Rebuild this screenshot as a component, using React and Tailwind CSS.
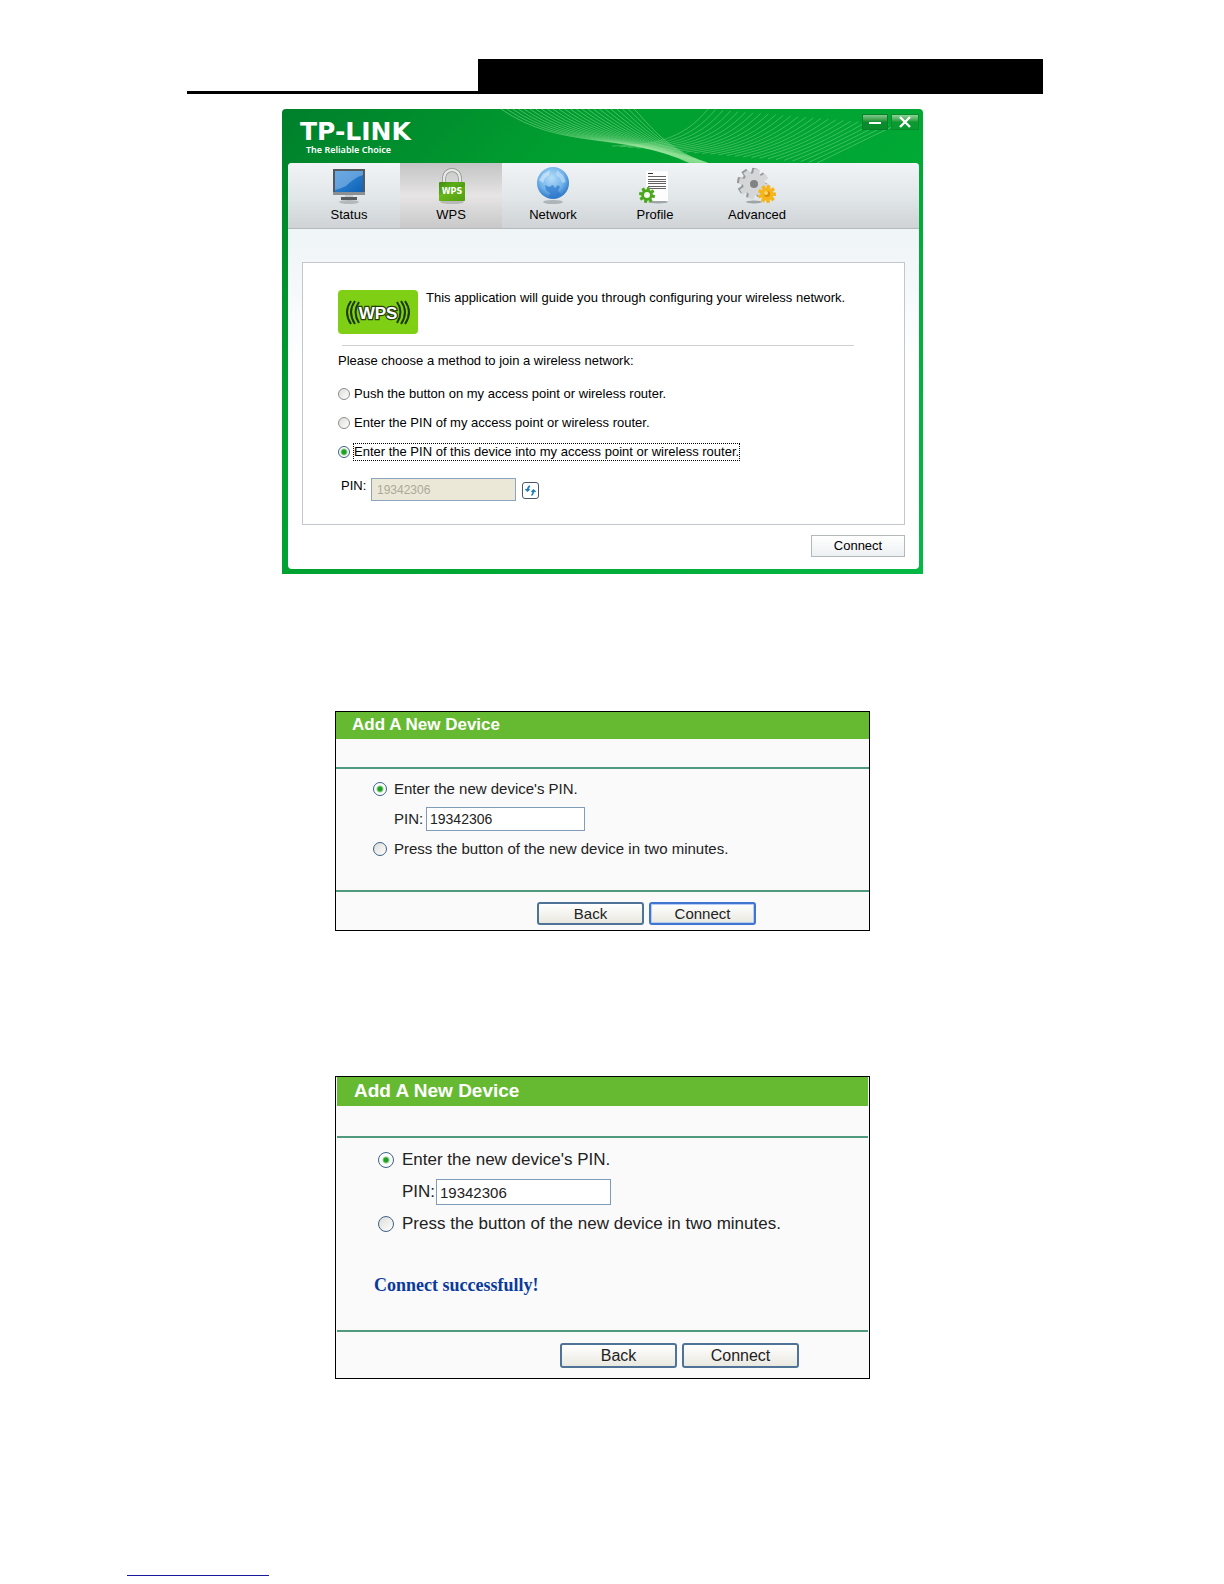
import React from 'react';
import clsx from 'clsx';

const RADIO =
  'appearance-none shrink-0 rounded-full border border-[#3c6288] bg-[linear-gradient(135deg,#dcdcd7,#fff)] checked:bg-[radial-gradient(circle,#21a121_0_2px,#8fd08f_3px,#fdfdfd_4px)]';

// evenly spaced curves between a first and a last one
const sweep = (count, from, to) =>
  Array.from({ length: count }, (_, i) => {
    const p = from.map((v, k) => (v + ((to[k] - v) * i) / (count - 1)).toFixed(1));
    return `M${p[0]},${p[1]} C${p[2]},${p[3]} ${p[4]},${p[5]} ${p[6]},${p[7]}`;
  });

const leftWaves = sweep(24, [219, 0, 280, 42, 340, 22, 408, 54], [352, 0, 366, 14, 385, 42, 426, 54]);
const rightWaves = sweep(26, [426, 0, 400, 32, 370, 36, 330, 37], [614, 16, 580, 32, 560, 42, 535, 54]);

const Waves = () => (
  <svg className="absolute top-0 left-0" width="641" height="54" viewBox="0 0 641 54" fill="none" aria-hidden="true">
    {leftWaves.map((d) => (
      <path key={d} d={d} stroke="#a2e8a2" strokeWidth="0.7" opacity="0.65" />
    ))}
    {rightWaves.map((d) => (
      <path key={d} d={d} stroke="#a2e8a2" strokeWidth="0.7" opacity="0.55" />
    ))}
  </svg>
);

const Gear = ({ cx, cy, r, teeth, fill, hole, holeFill }) => (
  <g transform={`translate(${cx} ${cy})`}>
    {Array.from({ length: teeth }, (_, i) => (
      <rect
        key={i}
        x={-r * 0.2}
        y={-r}
        width={r * 0.4}
        height={r * 0.6}
        rx="0.6"
        fill={fill}
        transform={`rotate(${(360 / teeth) * i + 12})`}
      />
    ))}
    <circle r={r * 0.72} fill={fill} />
    <circle r={hole} fill={holeFill} />
  </g>
);

const StatusIcon = () => (
  <svg width="40" height="40" viewBox="0 0 40 40" aria-hidden="true">
    <defs>
      <linearGradient id="screen" x1="0" y1="0" x2="1" y2="1">
        <stop offset="0" stopColor="#3f8fd8" />
        <stop offset="1" stopColor="#0d63b8" />
      </linearGradient>
    </defs>
    <ellipse cx="20" cy="36" rx="10" ry="2" fill="#b4babc" />
    <rect x="4" y="3" width="32" height="26" fill="#55595c" />
    <rect x="4" y="26" width="32" height="3" fill="#8b9093" />
    <rect x="6" y="5" width="28" height="21" fill="url(#screen)" />
    <path d="M6 5H34V9C27 11 22 15 17 20C13 22 9 23 6 24Z" fill="#8fc0ec" opacity="0.55" />
    <rect x="16" y="29" width="8" height="3" fill="#c9cccd" />
    <rect x="12" y="31" width="16" height="3" fill="#585d60" />
  </svg>
);

const LockIcon = () => (
  <svg width="40" height="40" viewBox="0 0 40 40" aria-hidden="true">
    <defs>
      <linearGradient id="lock" x1="0" y1="0" x2="1" y2="1">
        <stop offset="0" stopColor="#3f8a10" />
        <stop offset="0.35" stopColor="#5cae17" />
        <stop offset="1" stopColor="#2f7d0b" />
      </linearGradient>
    </defs>
    <ellipse cx="21" cy="36" rx="12" ry="2" fill="#b9b9b7" />
    <path d="M13 18V12A8 8 0 0 1 29 12V18" fill="none" stroke="#8d8f8c" strokeWidth="4" />
    <path d="M13 18V12A8 8 0 0 1 29 12V18" fill="none" stroke="#e6e8e5" strokeWidth="2.500" />
    <rect x="8" y="16" width="26" height="19" rx="1" fill="url(#lock)" />
    <path d="M8 29L34 20V35H8Z" fill="#7cc61f" opacity="0.45" />
    <text x="21" y="28" textAnchor="middle" fontFamily="DejaVu Sans" fontWeight="bold" fontSize="8" fill="#fff">
      WPS
    </text>
  </svg>
);

const GlobeIcon = () => (
  <svg width="40" height="40" viewBox="0 0 40 40" aria-hidden="true">
    <defs>
      <radialGradient id="globe" cx="0.45" cy="0.35" r="0.65">
        <stop offset="0" stopColor="#b7ddf8" />
        <stop offset="0.6" stopColor="#72b3ea" />
        <stop offset="1" stopColor="#2b78c8" />
      </radialGradient>
    </defs>
    <ellipse cx="20" cy="36" rx="10" ry="2" fill="#adb5b9" />
    <circle cx="20" cy="17" r="16" fill="url(#globe)" />
    <path d="M12 19L16 21L20 19L22 22L25 19L27 21L25 25L28 28L23 32L16 32L17 27L13 24Z" fill="#2f77cc" opacity="0.7" />
    <path d="M6 14L10 8L17 4L16 9L12 12L10 17Z" fill="#e2f3fd" opacity="0.55" />
    <path d="M24 4L30 9L33 16L29 17L27 12L23 9Z" fill="#d3ebfb" opacity="0.5" />
  </svg>
);

const ProfileIcon = () => (
  <svg width="40" height="40" viewBox="0 0 40 40" aria-hidden="true">
    <ellipse cx="23" cy="36" rx="10" ry="1.500" fill="#9fa5a6" />
    <rect x="11" y="5" width="22" height="30" fill="#fdfdfd" />
    <path d="M13 7.500H18" stroke="#333" />
    {[10.5, 13.5, 15.5, 17.5, 20.5, 22.5].map((y) => (
      <path key={y} d={`M13 ${y}H31`} stroke="#626262" />
    ))}
    <Gear cx={12} cy={29} r={8} teeth={8} fill="#4aa81c" hole={3} holeFill="#f4fbef" />
  </svg>
);

const AdvancedIcon = () => (
  <svg width="40" height="40" viewBox="0 0 40 40" aria-hidden="true">
    <ellipse cx="17" cy="36" rx="8" ry="1.500" fill="#9fa5a6" />
    <Gear cx={15} cy={17} r={15} teeth={8} fill="#96999b" hole={5} holeFill="#85898c" />
    <Gear cx={17} cy={18} r={15} teeth={8} fill="#d4d6d7" hole={4} holeFill="#7f8386" />
    <Gear cx={30} cy={28} r={9} teeth={9} fill="#f6b51a" hole={3} holeFill="#d98e08" />
    <circle cx="29" cy="27" r="2" fill="#fbd865" />
  </svg>
);

const tabs = [
  { name: 'Status', icon: StatusIcon },
  { name: 'WPS', icon: LockIcon, active: true },
  { name: 'Network', icon: GlobeIcon },
  { name: 'Profile', icon: ProfileIcon },
  { name: 'Advanced', icon: AdvancedIcon },
];

const WpsBadge = () => (
  <svg className="shrink-0" width="80" height="44" viewBox="0 0 80 44" role="img" aria-label="WPS">
    <rect width="80" height="44" rx="4" fill="#7fd014" />
    <g fill="none" stroke="#1c3a05" strokeWidth="2">
      <path d="M13 11Q5 22 13 34" />
      <path d="M17 11Q9 22 17 34" />
      <path d="M21 12Q14 22 21 33" />
      <path d="M67 11Q75 22 67 34" />
      <path d="M63 11Q71 22 63 34" />
      <path d="M59 12Q66 22 59 33" />
    </g>
    <text
      x="40"
      y="29"
      textAnchor="middle"
      fontFamily="Liberation Sans Narrow, Liberation Sans"
      fontWeight="bold"
      fontSize="17"
      fill="#fff"
      stroke="#26400c"
      strokeWidth="2.500"
      paintOrder="stroke"
    >
      WPS
    </text>
  </svg>
);

const methods = [
  'Push the button on my access point or wireless router.',
  'Enter the PIN of my access point or wireless router.',
  'Enter the PIN of this device into my access point or wireless router.',
];

const UtilityWindow = () => (
  <section className="relative w-full max-w-[641px] overflow-hidden rounded-t bg-[linear-gradient(135deg,#007f2b,#009e30_28%,#00a834_60%,#05b845)] pr-1 pb-[5px] pl-[6px]">
    <Waves />
    <header className="relative flex h-[54px] items-start justify-between pt-[5px]">
      <div className="pt-1 pl-3 text-white">
        <h1 className="font-['DejaVu_Sans',sans-serif] text-[25px] leading-[27px] font-bold">TP-LINK</h1>
        <p className="pl-[6px] font-['Noto_Sans',sans-serif] text-[9px] leading-[10px] font-semibold">The Reliable Choice</p>
      </div>
      <div className="flex gap-[3px]">
        <button
          aria-label="Minimize"
          className="flex h-4 w-[26px] items-center justify-center border border-[#0a7f2b] bg-linear-to-b from-[#7fcb8b] to-[#0a8c2d] to-50%"
        >
          <svg width="14" height="14" viewBox="0 0 14 14" stroke="#fff" strokeWidth="2">
            <path d="M1 8H13" />
          </svg>
        </button>
        <button
          aria-label="Close"
          className="flex h-4 w-[28px] items-center justify-center border border-[#0a8a2d] bg-linear-to-b from-[#8ed59a] to-[#0a9a30] to-50%"
        >
          <svg width="14" height="14" viewBox="0 0 14 14" stroke="#fff" strokeWidth="2.400">
            <path d="M2 2L12 12M12 2L2 12" />
          </svg>
        </button>
      </div>
    </header>

    <div className="relative overflow-hidden rounded bg-linear-to-b from-[#f0f5f8] from-20% to-white to-50%">
      <nav className="h-[66px] border-b border-[#b5babd] bg-linear-to-b from-[#f1f4f7] via-[#e2e7ea] to-[#cfd3d6] pl-[10px]">
        <div className="grid h-full w-full max-w-[510px] grid-cols-5">
          {tabs.map((tab) => (
            <button
              key={tab.name}
              className={clsx(
                'flex flex-col items-center pt-[3px] text-[13px] leading-4 text-black',
                tab.active && 'bg-linear-to-b from-[#c4c4c4] via-[#e6e4e4] to-[#c9c9c9]'
              )}
            >
              <tab.icon />
              <span className="pt-px">{tab.name}</span>
            </button>
          ))}
        </div>
      </nav>

      <div className="px-[14px] pt-[33px] pb-3">
        <div className="min-h-[263px] border border-[#c3c7ca] bg-white pt-[27px] pr-[50px] pl-[35px] text-[13px] leading-4 text-black">
          <div className="flex gap-2">
            <WpsBadge />
            <p>This application will guide you through configuring your wireless network.</p>
          </div>
          <hr className="mt-[11px] ml-1 border-[#cfcfcf]" />
          <div role="radiogroup" aria-labelledby="method-title" className="pt-[7px]">
            <p id="method-title">Please choose a method to join a wireless network:</p>
            {methods.map((label, i) => (
              <div key={label} className={clsx('flex items-center', i === 0 ? 'mt-4' : 'mt-[11px]')}>
                <input
                  type="radio"
                  name="method"
                  id={`method-${i}`}
                  defaultChecked={i === 2}
                  className={clsx(RADIO, 'size-3', i < 2 && 'border-[#8d8d8d]')}
                />
                <label
                  htmlFor={`method-${i}`}
                  className={clsx('ml-[3px] border border-dotted', i === 2 ? 'border-black' : 'border-transparent')}
                >
                  {label}
                </label>
              </div>
            ))}
          </div>
          <div className="mt-[17px] flex items-start pl-[3px]">
            <label htmlFor="device-pin" className="w-[30px]">
              PIN:
            </label>
            <input
              id="device-pin"
              disabled
              defaultValue="19342306"
              className="h-[23px] w-[145px] border border-[#8ba4c0] bg-[#ebe8d7] px-[5px] text-[12px] text-[#aca899]"
            />
            <button
              aria-label="Generate new PIN"
              className="mt-1 ml-[6px] flex size-[17px] items-center justify-center rounded-[3px] border border-[#4a5568] bg-white"
            >
              <svg width="13" height="13" viewBox="0 0 13 13" fill="none" stroke="#1f78b8" strokeWidth="1.500">
                <path d="M6 2Q3.500 3 3.500 7M1.500 5L3.500 7L5.500 5" />
                <path d="M7.500 11.500Q9.500 10 9.500 6.500M7.500 8L9.500 6L11.500 8" />
              </svg>
            </button>
          </div>
        </div>
        <div className="flex justify-end pt-[10px]">
          <button className="h-[22px] w-[94px] border border-[#b3b8bb] bg-linear-to-b from-white to-[#edf0f2] text-[13px] leading-4 text-black">
            Connect
          </button>
        </div>
      </div>
    </div>
  </section>
);

const XpButton = ({ large, focused, children }) => (
  <button
    className={clsx(
      'rounded-[3px] border-2 bg-linear-to-b from-white to-[#e9e8e0] leading-4 text-[#222]',
      large ? 'h-[25px] w-[117px] text-[16px]' : 'h-[23px] w-[107px] text-[15px]',
      focused ? 'border-[#3f74cf] shadow-[inset_0_0_0_1px_#b5cdf5]' : 'border-[#4f7396]'
    )}
  >
    {children}
  </button>
);

const AddDevice = ({ id, large, focused, message }) => (
  <section
    className={clsx(
      'w-full max-w-[535px] border border-black bg-[#fafafa] text-[#222]',
      large ? 'px-px text-[17px] leading-5' : 'text-[15px] leading-4'
    )}
  >
    <h2
      className={clsx(
        'bg-[#66ba32] font-bold text-white',
        large ? 'h-[29px] pl-[17px] text-[19px] leading-[27px]' : 'h-[27px] pl-4 text-[17px] leading-[26px]'
      )}
    >
      Add A New Device
    </h2>
    <div
      className={clsx(
        'border-y-2 border-[#4f9a7c]',
        large ? 'mt-[30px] min-h-[196px] pt-3 pl-[41px]' : 'mt-7 min-h-[125px] pt-3 pl-[37px]'
      )}
    >
      <div className={clsx('flex items-center', large ? 'gap-2' : 'gap-[7px]')}>
        <input type="radio" name={id} id={`${id}-pin`} defaultChecked className={clsx(RADIO, large ? 'size-4' : 'size-[14px]')} />
        <label htmlFor={`${id}-pin`}>Enter the new device's PIN.</label>
      </div>
      <div className={clsx('flex items-center', large ? 'my-[9px] pl-6' : 'my-[10px] pl-[21px]')}>
        <label htmlFor={`${id}-value`} className={large ? 'w-[34px]' : 'w-8'}>
          PIN:
        </label>
        <input
          id={`${id}-value`}
          defaultValue="19342306"
          className={clsx(
            'border border-[#7f9db9] bg-white px-[3px]',
            large ? 'h-[26px] w-[175px] text-[15px]' : 'h-6 w-[159px] text-[14px]'
          )}
        />
      </div>
      <div className={clsx('flex items-center', large ? 'gap-2' : 'gap-[7px]')}>
        <input type="radio" name={id} id={`${id}-button`} className={clsx(RADIO, large ? 'size-4' : 'size-[14px]')} />
        <label htmlFor={`${id}-button`}>Press the button of the new device in two minutes.</label>
      </div>
      {message && (
        <p className="-ml-1 pt-[41px] font-['Liberation_Serif',serif] text-[18px] font-bold text-[#0a3a9c]">{message}</p>
      )}
    </div>
    <div className={clsx('flex justify-end gap-[5px]', large ? 'pt-[11px] pr-[69px] pb-[10px]' : 'pt-[10px] pr-[113px] pb-[5px]')}>
      <XpButton large={large}>Back</XpButton>
      <XpButton large={large} focused={focused}>
        Connect
      </XpButton>
    </div>
  </section>
);

export default function App() {
  return (
    <div className="min-h-screen bg-white pt-[59px] pb-2 font-['Liberation_Sans',Arial,sans-serif]">
      <main className="pr-[181px] pl-[187px]">
        <div className="flex h-[35px] justify-end border-b-[3px] border-black">
          <div className="w-[66%] bg-black" />
        </div>
        <div className="flex flex-col items-center pt-[15px] pr-[25px]">
          <UtilityWindow />
          <div className="flex w-full justify-center pt-[137px] pb-[145px]">
            <AddDevice id="first" focused />
          </div>
          <AddDevice id="second" large message="Connect successfully!" />
        </div>
      </main>
      <footer className="pt-[196px] pl-[127px]">
        <div className="w-[142px] border-b border-[#1a1a9c]" />
      </footer>
    </div>
  );
}
